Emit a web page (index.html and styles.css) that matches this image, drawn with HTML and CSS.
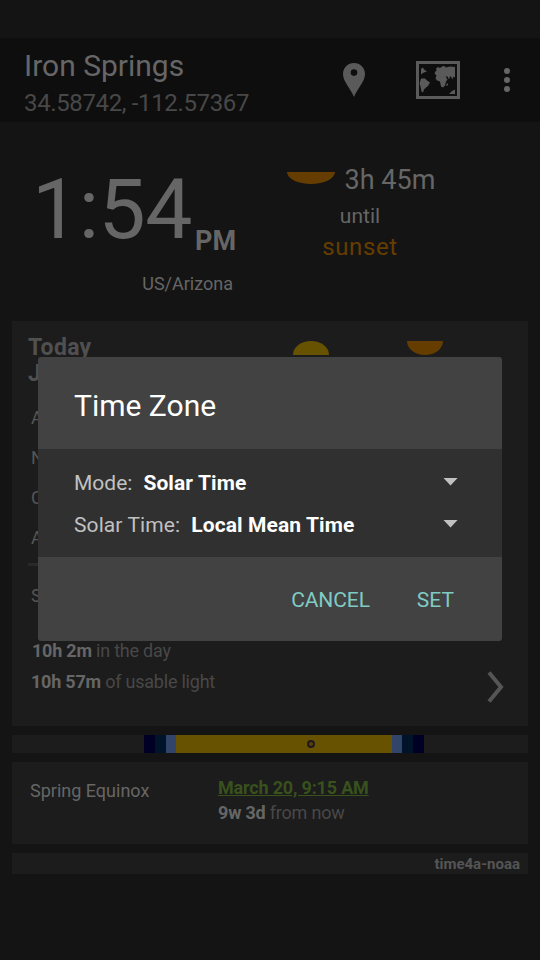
FILE: index.html
```
<!DOCTYPE html>
<html lang="en">
<head>
<meta charset="utf-8">
<title>Time Zone</title>
<link rel="stylesheet" href="styles.css">
</head>
<body>
<div class="screen">
  <header class="appbar">
    <div class="place">
      <div class="place-name">Iron Springs</div>
      <div class="place-coords">34.58742, -112.57367</div>
    </div>
    <svg class="icon-pin" width="22" height="34" viewBox="0 0 22 34"><path fill-rule="evenodd" d="M11 0C4.900 0 0 4.900 0 11c0 7.500 7 13.500 11 23 4-9.500 11-15.500 11-23C22 4.900 17.100 0 11 0zm0 6.300a3.300 3.300 0 1 1 0 6.600 3.300 3.300 0 0 1 0-6.600z"/></svg>
    <svg class="icon-map" width="44" height="38" viewBox="0 0 44 38"><path fill-rule="evenodd" d="M0 0h44v38H0zM3 3v32h38V3z"/><path d="M5 8l2-1.500 1 2 3 2-2 .5-2 1-2 1.500zM5 17.500l4 0 2 2 3 2-2 3.500-2 1.500-2 2-1 3-1.500-1-1-5-1-3zM18.500 12.500l1-2 1-1-.500-2 2-1.500 2 1 3-2 2 .500 1 1 4-1 5 .5v10.500l-1.500-1-1 3-1.500-3-1 0-1 3-1.500-3-2 0 2 3-1.500 2-1 4-2 2-2-1-1-5-3-1-1.500-2 1-3zM33 33l3-3 3-1.500V33zM30 24l2-2v2l-1.500 1z"/></svg>
    <svg class="icon-more" width="6" height="24" viewBox="0 0 6 24"><circle cx="3" cy="3" r="3"/><circle cx="3" cy="12" r="3"/><circle cx="3" cy="21" r="3"/></svg>
  </header>

  <section class="hero">
    <div class="clock">
      <div class="clock-row"><span class="clock-time">1:54</span><span class="clock-suffix">PM</span></div>
      <div class="clock-zone">US/Arizona</div>
    </div>
    <div class="next">
      <div class="next-row"><span class="setting-sun wide"></span><span class="next-time">3h 45m</span></div>
      <div class="next-until">until</div>
      <div class="next-event">sunset</div>
    </div>
  </section>

  <main class="cards">
    <section class="card today">
      <div class="today-head">
        <div class="today-title">Today<br>J</div>
        <span class="rising-sun"></span>
        <span class="setting-sun"></span>
      </div>
      <div class="labels"><div>A</div><div>N</div><div>C</div><div>A</div></div>
      <div class="rule"></div>
      <div class="season">S</div>
      <div class="totals">
        <div class="total-lines">
          <div class="day"><b>10h 2m</b> in the day</div>
          <div class="light"><b>10h 57m</b> of usable light</div>
        </div>
        <svg class="chevron" width="18" height="32" viewBox="0 0 18 32"><path d="M2 1.500L14 16 2 30.500" fill="none" stroke="#555" stroke-width="4"/></svg>
      </div>
    </section>

    <div class="lightmap">
      <i class="night"></i><i class="astro"></i><i class="nautical"></i><i class="civil"></i>
      <i class="daylight"><span class="now"></span></i>
      <i class="civil"></i><i class="nautical"></i><i class="astro"></i><i class="night"></i>
    </div>

    <section class="card equinox">
      <div class="equinox-name">Spring Equinox</div>
      <div class="equinox-info">
        <div class="equinox-date">March 20, 9:15 AM</div>
        <div class="equinox-note"><b>9w 3d</b> from now</div>
      </div>
    </section>

    <footer class="card source">time4a-noaa</footer>
  </main>

  <div class="dialog">
    <div class="dialog-title">Time Zone</div>
    <div class="dialog-body">
      <div class="option"><span>Mode:</span><b>Solar Time</b><i class="caret"></i></div>
      <div class="option"><span class="wide-label">Solar Time:</span><b>Local Mean Time</b><i class="caret"></i></div>
    </div>
    <div class="dialog-actions"><span class="cancel">CANCEL</span><span>SET</span></div>
  </div>
</div>
</body>
</html>
```
FILE: styles.css
```
* { box-sizing: border-box; }
body { margin: 0; background: #141414; font-family: Roboto, sans-serif; color: #666; }
.screen { position: relative; width: 540px; height: 960px; padding-top: 38px; overflow: hidden; background: #141414; }

.appbar { display: flex; height: 84px; padding: 0 30px 0 24px; background: #0e0e0e; fill: #5a5a5a; }
.place { width: 319px; padding-top: 10px; }
.place-name { font-size: 30px; line-height: 36px; }
.place-coords { padding-top: 1px; font-size: 24px; line-height: 36px; letter-spacing: -0.36px; color: #484848; }
.icon-pin { margin-top: 25px; }
.icon-map { margin: 23px 0 0 51px; }
.icon-more { margin: 30px 0 0 44px; fill: #666; flex: none; }

.hero { display: flex; height: 199px; }
.clock { width: 270px; padding: 45px 0 0 32px; }
.clock-row { display: flex; height: 84px; }
.clock-time { font-size: 84px; line-height: 86px; letter-spacing: -0.5px; }
.clock-suffix { margin: 60px 0 0 3px; font-size: 27px; line-height: 28px; font-weight: 700; }
.clock-zone { margin: 23px 37px 0 0; text-align: right; font-size: 18px; line-height: 20px; }
.next { width: 180px; padding-top: 42px; text-align: center; }
.next-row { display: flex; justify-content: center; gap: 10px; margin-left: 2px; font-size: 27px; line-height: 32px; white-space: nowrap; }
.next-until { margin-top: 7px; font-size: 21px; line-height: 26px; }
.next-event { margin-top: 3px; font-size: 24px; line-height: 30px; letter-spacing: 0.6px; color: #663d00; }
.setting-sun { width: 36px; height: 14px; background: #663d00; border-radius: 0 0 50% 50% / 0 0 100% 100%; }
.setting-sun.wide { width: 48px; height: 12px; margin-top: 8px; }
.rising-sun { width: 36px; height: 14px; background: #665200; border-radius: 50% 50% 0 0 / 100% 100% 0 0; }

.cards { display: flex; flex-direction: column; gap: 9px; padding: 0 12px; }
.card { background: #1c1c1c; }
.today { height: 405px; padding: 13px 16px 0; }
.today-head { display: flex; height: 64px; padding-top: 7px; }
.today-title { width: 265px; margin-top: -6px; font-size: 23px; line-height: 26px; letter-spacing: 0.3px; font-weight: 700; color: #505050; }
.rising-sun { margin-right: 78px; }
.labels { padding-left: 3px; font-size: 18px; line-height: 40px; color: #555; }
.rule { width: 470px; height: 3px; margin-top: 5px; background: #292929; }
.season { padding: 20px 0 0 3px; font-size: 18px; line-height: 20px; color: #555; }
.totals { display: flex; justify-content: space-between; padding: 29px 7px 0 3px; font-size: 18px; line-height: 31px; letter-spacing: -0.22px; color: #484848; }
.totals b { color: #666; }
.total-lines .day { padding-left: 1px; }
.chevron { margin-top: 36px; }

.lightmap { display: flex; height: 18px; background: #1c1c1c; }
.lightmap i { display: block; width: 11px; }
.lightmap .night { width: 132px; }
.lightmap .night:last-child { width: 104px; }
.lightmap .astro { background: #000026; }
.lightmap .nautical { background: #001429; }
.lightmap .civil { width: 10px; background: #33446b; }
.lightmap .daylight { width: 216px; padding: 5px 0 0 131px; background: #665200; }
.now { display: block; width: 8px; height: 8px; border: 2px solid #1c1c1c; border-radius: 50%; background: #663d00; }

.equinox { display: flex; height: 82px; padding: 14px 18px 0; font-size: 18px; }
.equinox-name { width: 188px; padding-top: 3px; line-height: 24px; }
.equinox-date { font-weight: 700; line-height: 23px; letter-spacing: -0.18px; color: #38511d; text-decoration: underline; }
.equinox-note { padding-top: 1px; line-height: 26px; letter-spacing: -0.2px; color: #484848; }
.equinox-note b { color: #666; }
.source { height: 21px; padding-right: 8px; text-align: right; font-size: 15px; line-height: 22px; font-weight: 700; color: #555; }

.dialog { position: absolute; left: 38px; top: 357px; width: 464px; height: 284px; border-radius: 3px; background: #424242; overflow: hidden; }
.dialog-title { height: 92px; padding: 31px 36px 0; font-size: 30px; line-height: 36px; color: #fff; }
.dialog-body { height: 108px; padding: 13px 44px 0 36px; background: #303030; font-size: 21px; line-height: 42px; color: #c1c1c1; }
.option { display: flex; align-items: center; height: 42px; }
.option b { margin-left: 11px; letter-spacing: 0.1px; color: #fff; }
.option .wide-label { letter-spacing: 0.1px; }
.caret { margin: -3px 0 0 auto; width: 15px; height: 8px; background: #c1c1c1; clip-path: polygon(0 0, 100% 0, 50% 100%); }
.dialog-actions { display: flex; justify-content: flex-end; gap: 47px; padding: 28px 48px 0; font-size: 21px; line-height: 30px; color: #80cbc4; }
.dialog-actions .cancel { letter-spacing: -0.1px; }
```
